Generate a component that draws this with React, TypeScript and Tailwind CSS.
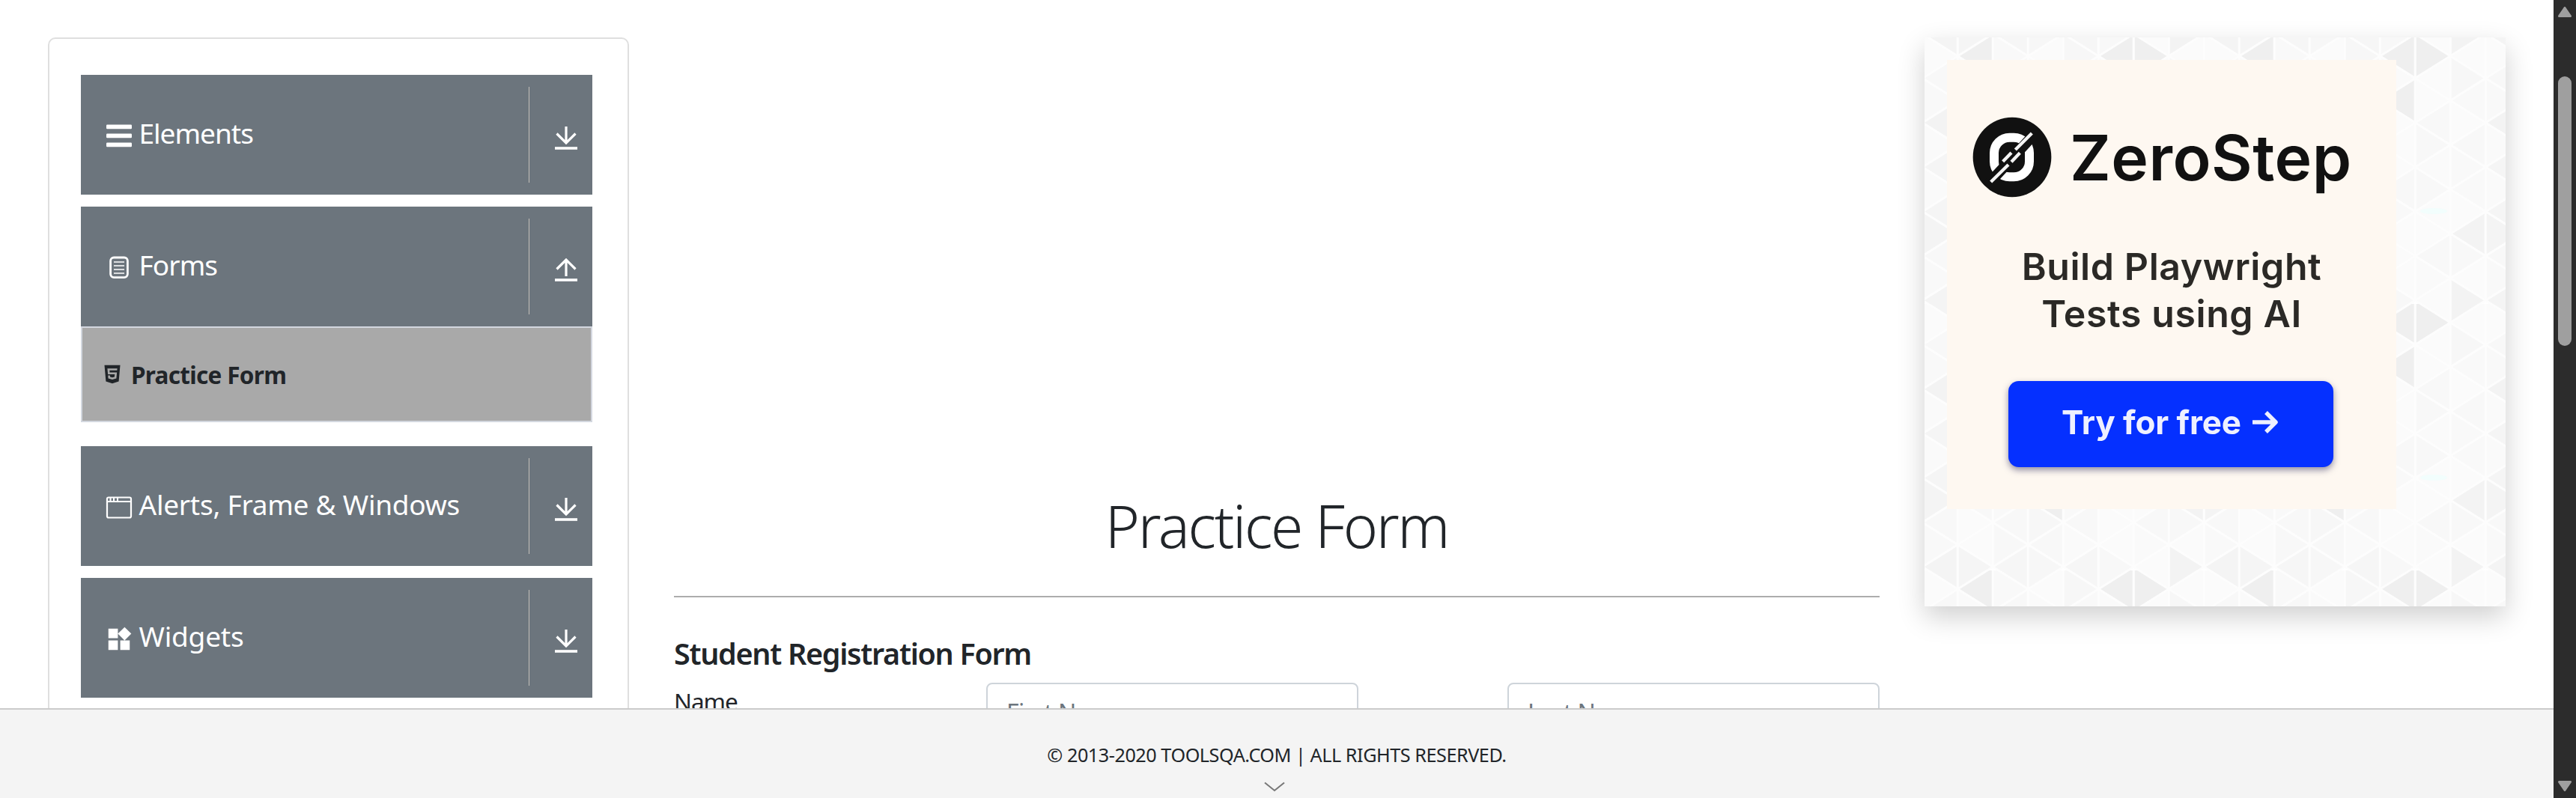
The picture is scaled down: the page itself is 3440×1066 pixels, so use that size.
import type { ReactNode } from "react";
import { FaHtml5 } from "react-icons/fa";
import { MdWidgets } from "react-icons/md";

function BarsIcon() {
  return (
    <svg viewBox="0 0 38 38" className="h-[38px] w-[38px]" fill="currentColor">
      <rect x="2" y="3.5" width="34" height="5.8" rx="1.2" />
      <rect x="2" y="15.5" width="34" height="5.8" rx="1.2" />
      <rect x="2" y="27.5" width="34" height="5.8" rx="1.2" />
    </svg>
  );
}

function FormIcon() {
  return (
    <svg viewBox="0 0 38 38" className="h-[38px] w-[38px]" fill="none" stroke="currentColor">
      <rect x="7.6" y="5" width="22.8" height="26.6" rx="4.5" strokeWidth="2.8" />
      <path d="M12 11h14M12 16h14M12 21h14M12 26h14" strokeWidth="1.7" />
    </svg>
  );
}

function WindowIcon() {
  return (
    <svg viewBox="0 0 38 38" className="h-[38px] w-[38px]" fill="none" stroke="currentColor">
      <rect x="3" y="5.5" width="32" height="27" rx="2" strokeWidth="2.2" />
      <path d="M3 11h32" strokeWidth="2" />
      <path d="M7.5 6v4.5M12 6v4.5M17 6v4.5" strokeWidth="2" />
    </svg>
  );
}

function ArrowIcon({ up }: { up?: boolean }) {
  return (
    <svg viewBox="0 0 30 32" className="mt-[69px] ml-[34px] h-8 w-[30px]" fill="none" stroke="#fff" strokeWidth="3.2">
      <path d={up ? "M15 2v22M2.5 14.5 15 2l12.5 12.5" : "M15 0v22M2.5 9.5 15 22 27.500 9.500"} />
      <path d="M0 29h30" strokeWidth="3.6" />
    </svg>
  );
}

function Group({ icon, children, up }: { icon: ReactNode; children: ReactNode; up?: boolean }) {
  return (
    <div className="flex h-40 shrink-0 items-start bg-[#6c757d] pl-8 text-white">
      <div className="mt-[63px] w-[38px]">{icon}</div>
      <div className="mt-[53px] ml-[7.500px] flex-1 text-[37px] leading-[50px] whitespace-nowrap">{children}</div>
      <div className="mt-4 h-32 w-px bg-[#c4c0ba]" />
      <div className="w-[84px]">
        <ArrowIcon up={up} />
      </div>
    </div>
  );
}

/* Shades of the triangle mosaic: one row per column strip, twelve half-steps down. */
const shades = [
  ["f4", "fb", "f8", "f9", "f3", "fa", "f5", "fa", "f5", "f4", "f8", "f9"],
  ["f5", "ef", "fa", "f8", "f9", "fa", "f8", "f9", "fa", "f8", "fb", "fb"],
  ["f6", "f9", "f8", "fa", "f8", "f9", "f8", "fa", "f9", "f9", "f8", "f8"],
  ["f7", "fb", "fa", "f8", "f9", "fa", "f8", "f9", "fa", "ef", "f7", "f8"],
  ["f6", "f7", "f9", "fa", "f8", "f9", "fa", "f8", "f9", "f9", "f8", "fa"],
  ["f8", "ef", "fa", "ef", "fb", "fb", "fb", "f8", "f9", "fb", "fb", "fb"],
  ["fb", "ef", "fb", "fb", "f8", "f8", "fa", "f8", "fb", "fb", "f8", "fa"],
  ["f3", "fb", "f7", "f9", "fb", "f8", "f9", "f9", "fb", "f3", "f8", "fb"],
];
const STEP = 356 / 12;

function Mosaic() {
  return (
    <svg className="absolute inset-0 h-full w-full">
      <defs>
        <pattern id="mosaic" width="376" height="356" patternUnits="userSpaceOnUse">
          <g stroke="#fdfdfd" strokeWidth="3" strokeLinejoin="round">
            {[...shades, shades[0]].map((col, k) =>
              [...col, col[0]].map((s, m) => {
                const left = -2.7 + 47 * k;
                const right = left + 47;
                const y = -4.7 + STEP * m;
                const apexLeft = (k + m) % 2 === 0;
                const apex = apexLeft ? left : right;
                const side = apexLeft ? right : left;
                return (
                  <path
                    key={`${k}-${m}`}
                    fill={`#${s}${s}${s}`}
                    d={`M${apex} ${y}L${side} ${y - STEP}V${y + STEP}Z`}
                  />
                );
              }),
            )}
          </g>
          <ellipse cx="304" cy="232" rx="18" ry="4" fill="#f2fefd" />
        </pattern>
      </defs>
      <rect width="100%" height="100%" fill="url(#mosaic)" />
    </svg>
  );
}

function ZeroStepLogo() {
  return (
    <svg viewBox="28 18 318 324" className="h-[108px] w-[106px]" fill="none">
      <ellipse cx="187" cy="180" rx="157" ry="160" fill="#111" />
      <rect x="115" y="101" width="141" height="158" rx="62" stroke="#fff" strokeWidth="36" />
      <path d="M96 283 276 88" stroke="#111" strokeWidth="42" />
      <path d="M102 279 172 210M150 197l34-35M184 199l34-36M200 150l66-66" stroke="#f4f4f4" strokeWidth="13" />
    </svg>
  );
}

export default function App() {
  return (
    <div className="flex h-[1066px] w-[3440px] overflow-hidden bg-white font-['Noto_Sans',sans-serif] text-[#212529]">
      <div className="flex w-[3410px] flex-col">
        <main className="flex h-[946px] items-start overflow-hidden pt-[50px] pl-16">
          <aside className="flex h-[1100px] w-[776px] shrink-0 flex-col rounded-[10px] border-2 border-[#dfdfdf] px-[42px] pt-12 pr-[47px]">
            <Group icon={<BarsIcon />}>
              <span className="tracking-[-1px]">Elements</span>
            </Group>
            <div className="h-4 shrink-0" />
            <Group icon={<FormIcon />} up>
              <span className="tracking-[-0.9px]">Forms</span>
            </Group>
            <div className="mb-8 flex h-32 shrink-0 items-start border-2 border-[#d3d7df] bg-[#a9a9a9] pl-[26px]">
              <FaHtml5 className="mt-[48px] h-[28px] w-[28px]" />
              <span className="mt-[41px] ml-[11px] text-[31.500px] leading-[44px] font-bold tracking-[-0.7px]">
                Practice Form
              </span>
            </div>
            <Group icon={<WindowIcon />}>
              <span className="tracking-[-0.25px]">Alerts, Frame &amp; Windows</span>
            </Group>
            <div className="h-4 shrink-0" />
            <Group icon={<MdWidgets className="h-[38px] w-[38px]" />}>
              <span className="tracking-[-0.2px]">Widgets</span>
            </Group>
          </aside>

          <section className="ml-[60px] w-[1610px] shrink-0 pt-[598px]">
            <h1 className="text-center text-[78.500px] leading-[108px] font-light tracking-[-2.3px]">Practice Form</h1>
            <hr className="mt-[40px] h-0.5 border-0 bg-[#adadad]" />
            <h5 className="mt-[48px] text-[39.500px] leading-[54px] font-semibold tracking-[-1.3px]">
              Student Registration Form
            </h5>
            <div className="mt-3 flex items-start">
              <div className="mt-[3px] w-[417px] text-[31.500px] leading-[44px] tracking-[-1px]">Name</div>
              <div className="h-[76px] w-[497px] rounded-lg border-2 border-[#ced4da] pt-[16px] pl-[25px] text-[32px] leading-[44px] tracking-[-0.700px] text-[#6c757d]">
                First Name
              </div>
              <div className="ml-[199px] h-[76px] w-[497px] rounded-lg border-2 border-[#ced4da] pt-[16px] pl-[25px] text-[32px] leading-[44px] tracking-[-0.700px] text-[#6c757d]">
                Last Name
              </div>
            </div>
          </section>

          <div className="relative ml-[60px] h-[760px] w-[776px] shrink-0 shadow-[0_14px_34px_rgba(0,0,0,0.19)]">
            <Mosaic />
            <div className="relative mt-[30px] ml-[30px] flex h-[600px] w-[600px] flex-col items-center bg-[#fef8f1] font-['Inter',sans-serif] text-[#2b2926]">
              <div className="mt-[76px] flex w-full items-start pl-[34px] blur-[0.600px]">
                <ZeroStepLogo />
                <span className="mt-[3px] ml-[24px] text-[84px] leading-[104px] font-semibold tracking-[0.500px] text-[#111]">
                  ZeroStep
                </span>
              </div>
              <div className="mt-[61px] text-center text-[50px] leading-[63px] font-semibold tracking-[0.6px] blur-[0.600px]">
                Build Playwright
                <br />
                Tests using AI
              </div>
              <div className="mt-[58px] mr-[2px] flex h-[115px] w-[434px] items-start rounded-[14px] bg-[#0530ff] pl-[71px] text-[#eef0ff] shadow-[0_4px_8px_rgba(40,40,90,0.5)]">
                <span className="mt-[27px] text-[44px] leading-[56px] font-bold tracking-[-0.1px] blur-[0.600px]">Try for free</span>
                <svg viewBox="0 0 36 32" className="mt-[39px] ml-[14px] h-8 w-9" fill="none" stroke="currentColor" strokeWidth="5.5" strokeLinejoin="round">
                  <path d="M1 16h31M19 3l13 13-13 13" />
                </svg>
              </div>
            </div>
          </div>
        </main>

        <footer className="flex h-[120px] flex-col items-center border-t-2 border-[#cbcbcb] bg-[#f4f4f4]">
          <span className="mt-[42px] text-[25.200px] leading-[36px] tracking-[-0.450px]">
            © 2013-2020 TOOLSQA.COM | ALL RIGHTS RESERVED.
          </span>
          <svg viewBox="0 0 28 14" className="mt-[18px] mr-[7px] h-3.5 w-7" fill="none" stroke="#777" strokeWidth="2">
            <path d="M1 1.500 14 12 27 1.500" />
          </svg>
        </footer>
      </div>

      <div className="flex w-[30px] flex-col items-center bg-[#2c2c2c]">
        <svg viewBox="0 0 18 14" className="mt-[9px] h-3.5 w-[18px]" fill="#9f9f9f" stroke="#9f9f9f" strokeWidth="3" strokeLinejoin="round">
          <path d="M9 1.500 16.500 12.500h-15z" />
        </svg>
        <div className="mt-[79px] h-[360px] w-[18px] rounded-full bg-[#9f9f9f]" />
        <svg viewBox="0 0 18 14" className="mt-auto mb-[9px] h-3.5 w-[18px]" fill="#9f9f9f" stroke="#9f9f9f" strokeWidth="3" strokeLinejoin="round">
          <path d="M9 12.500 16.500 1.500h-15z" />
        </svg>
      </div>
    </div>
  );
}
